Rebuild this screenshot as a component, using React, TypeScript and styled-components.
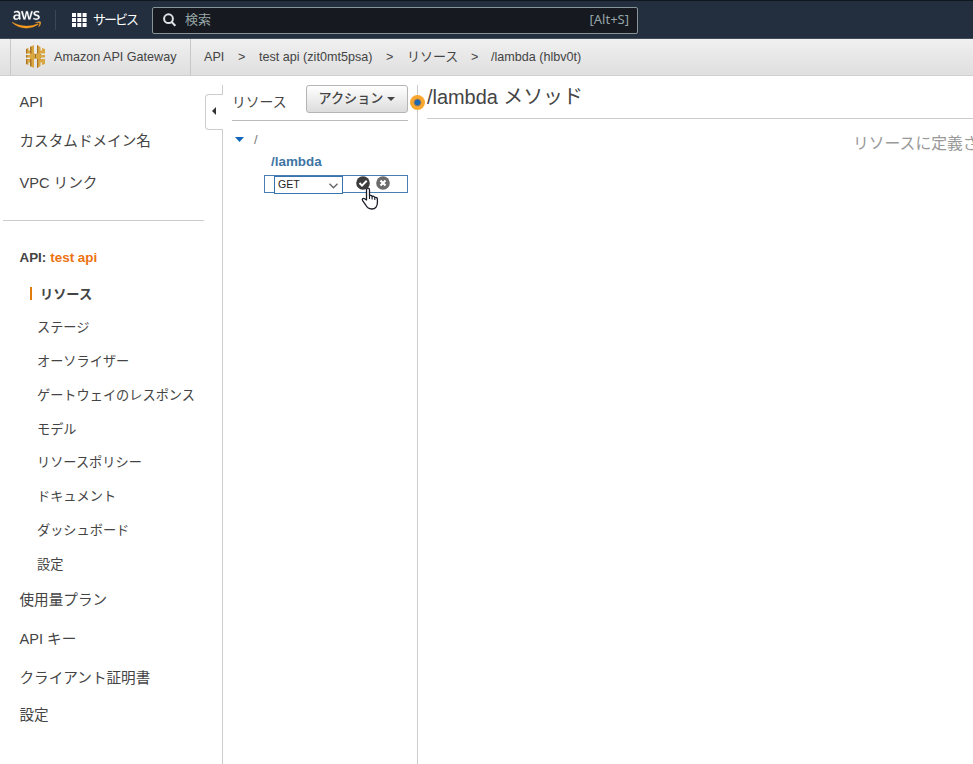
import React from "react";
import styled, { createGlobalStyle } from "styled-components";
import { FaAws } from "react-icons/fa";

const GlobalStyle = createGlobalStyle`
  * { box-sizing: border-box; }
  html, body { margin: 0; background: #fff; overflow: hidden; }
  body, button {
    font-family: "Liberation Sans", "Noto Sans CJK JP", sans-serif;
    color: #444;
  }
`;

const Page = styled.div`
  width: 973px;
  height: 764px;
  display: flex;
  flex-direction: column;
  overflow: hidden;
  white-space: nowrap;
`;

const TopBar = styled.header`
  height: 39px;
  flex: none;
  display: flex;
  align-items: center;
  padding: 1px 0 0 12px;
  background: #232f3e;
  border-top: 1px solid #10161d;
  border-bottom: 1px solid #414c5a;
`;

const AwsLogo = styled(FaAws)`
  width: 29px;
  height: 23px;
  flex: none;
  margin-top: -1px;
  path { fill: url(#awsFill); stroke: url(#awsFill); stroke-width: 5px; }
`;

const TopDivider = styled.span`
  width: 1px;
  height: 20px;
  margin: 0 16px 0 14px;
  background: #3b4756;
`;

const ServicesLabel = styled.span`
  width: 59px;
  margin: -3px 0 0 6px;
  font: 13px/20px "Noto Sans CJK JP", sans-serif;
  letter-spacing: -2px;
  color: #fff;
`;

const SearchBox = styled.div`
  width: 486px;
  height: 27px;
  padding: 0 8px 0 10px;
  display: flex;
  align-items: center;
  background: #16191f;
  border: 1px solid #879596;
  border-radius: 2px;
  font: 13px/20px "Noto Sans", "Noto Sans CJK JP", sans-serif;
  color: #95a5a6;
`;

const SearchText = styled.span`
  flex: 1;
  margin: -3px 0 0 9px;
`;

const Shortcut = styled.span`
  margin-top: -2px;
`;

const Breadcrumbs = styled.nav`
  height: 37px;
  flex: none;
  display: flex;
  align-items: center;
  padding-left: 10px;
  background: linear-gradient(#f0f0f0, #dfdfdf);
  border-bottom: 1px solid #d0d0d0;
  font-size: 12.6px;
`;

const Product = styled.div`
  width: 181px;
  height: 36px;
  display: flex;
  align-items: center;
  gap: 8px;
  padding: 0 0 1px 14px;
  border-left: 1px solid #c8c8c8;
  border-right: 1px solid #c8c8c8;
  margin-right: 13px;
`;

const Crumb = styled.span<{ $width: number; $size?: number }>`
  width: ${(p) => p.$width}px;
  margin-top: ${(p) => (p.$size ? -4 : -1)}px;
  font-size: ${(p) => p.$size ?? 12.6}px;
`;

const Body = styled.div`
  flex: 1;
  display: flex;
  min-height: 0;
`;

const Sidebar = styled.aside`
  width: 205px;
  padding-top: 7px;
`;

const NavItem = styled.div<{ $height: number; $nested?: boolean }>`
  height: ${(p) => p.$height}px;
  display: flex;
  align-items: center;
  padding-left: ${(p) => (p.$nested ? 37 : 19.5)}px;
  font-size: ${(p) => (p.$nested ? 13.2 : 14.6)}px;
`;

const NavRule = styled.hr`
  width: 201px;
  height: 1px;
  margin: 16px 0 19px 3px;
  border: 0;
  background: #ccc;
`;

const ApiTitle = styled.div`
  height: 36px;
  display: flex;
  align-items: center;
  gap: 4px;
  padding: 0 0 1px 19.5px;
  font-size: 13.4px;
  font-weight: bold;
  span { color: #ec7211; }
`;

const ActiveItem = styled.div`
  height: 34px;
  display: flex;
  align-items: center;
  padding-left: 30px;
  gap: 8px;
  font-size: 13.2px;
  font-weight: bold;
  &::before {
    content: "";
    width: 2px;
    height: 13px;
    background: #e07c0c;
  }
`;

const CollapseRail = styled.div`
  width: 18px;
  padding-top: 9px;
  display: flex;
  flex-direction: column;
`;

const RailLine = styled.div<{ $height?: number }>`
  width: 1px;
  align-self: flex-end;
  background: #ccc;
  ${(p) => (p.$height ? `height: ${p.$height}px;` : "flex: 1;")}
`;

const CollapseTab = styled.button`
  height: 36px;
  width: 18px;
  padding: 0 0 3px 6px;
  display: flex;
  align-items: center;
  background: #fff;
  border: 1px solid #ccc;
  border-right: 0;
  border-radius: 4px 0 0 4px;
`;

const ResourcePane = styled.section`
  width: 194px;
  padding: 9px 9px 0;
`;

const PaneHeader = styled.div`
  height: 36px;
  display: flex;
  align-items: flex-start;
  justify-content: space-between;
  border-bottom: 1px solid #bbb;
`;

const PaneTitle = styled.span`
  font-size: 13.8px;
  line-height: 35px;
`;

const ActionsButton = styled.button`
  width: 102px;
  height: 28px;
  padding: 0 0 4px;
  display: flex;
  align-items: center;
  justify-content: center;
  gap: 4px;
  background: linear-gradient(#fff, #dcdcdc);
  border: 1px solid #b5b5b5;
  border-radius: 3px;
  font-size: 13.1px;
  font-weight: 500;
  white-space: nowrap;
  svg { margin-top: 3px; }
`;

const RootRow = styled.div`
  height: 36px;
  display: flex;
  align-items: center;
  gap: 10px;
  padding-left: 3px;
  font-size: 13px;
  color: #777;
`;

const ResourceName = styled.div`
  height: 17px;
  margin-top: -5px;
  padding-left: 39px;
  font-size: 13.4px;
  line-height: 20px;
  font-weight: bold;
  color: #3d74a3;
`;

const MethodRow = styled.div`
  position: relative;
  width: 144px;
  height: 18px;
  margin: 6px 0 0 32px;
  padding-left: 9px;
  display: flex;
  align-items: center;
  border: 1px solid #4a7eb0;
`;

const MethodSelect = styled.div`
  width: 69px;
  height: 18px;
  flex: none;
  margin: 2px 13px 0 0;
  padding: 0 4px 2px 3px;
  display: flex;
  align-items: center;
  justify-content: space-between;
  background: #fff;
  border: 1px solid #3774ad;
  font-size: 10.6px;
  color: #222;
  svg { margin-top: 3px; }
`;

const RoundIcon = styled.svg`
  width: 14px;
  height: 14px;
  margin: -2px 6px 0 0;
  flex: none;
`;

const Pointer = styled.svg`
  position: absolute;
  left: 96px;
  top: 10px;
`;

const SplitRail = styled.div`
  width: 1px;
  margin-top: 9px;
  position: relative;
  background: #ccc;
`;

const SplitDot = styled.span`
  position: absolute;
  left: -7px;
  top: 10px;
  width: 15px;
  height: 15px;
  border-radius: 50%;
  background: radial-gradient(circle, #1e68b4 0 2.4px, #a77f51 3.4px, #f9a72f 4.3px);
`;

const MethodPane = styled.main`
  flex: 1;
  min-width: 0;
  padding-left: 9px;
`;

const MethodTitle = styled.h1`
  height: 43px;
  margin: 0;
  border-bottom: 1px solid #ccc;
  font-size: 19.9px;
  line-height: 42px;
  font-weight: normal;
`;

const EmptyMessage = styled.p`
  margin: 12px 0 0 426px;
  font-size: 15.8px;
  line-height: 26px;
  color: #999;
`;

const AppsIcon = () => (
  <svg width="15" height="14" viewBox="0 0 15 14" fill="#fff">
    {[0, 5, 10].map((y) =>
      [0, 5.3, 10.6].map((x) => <rect key={`${x}-${y}`} x={x} y={y} width="4" height="4" />)
    )}
  </svg>
);

const SearchIcon = () => (
  <svg width="13" height="14" viewBox="0 0 13 14" fill="none" stroke="#dfe3e5" strokeWidth="2">
    <circle cx="5.5" cy="5.7" r="4.4" />
    <path d="M8.7 9l3.6 3.8" />
  </svg>
);

const GatewayIcon = () => (
  <svg width="21" height="23" viewBox="0 0 21 23">
    <path fill="#9d7030" d="M5 9h11v4.500H5z" />
    <path fill="#d9a741" d="M5 2l4-2v8.500h1V14H9v9l-4-2v-3.500H3.500V20L1 19v-5h4v-1.500H1V10h4V8.500H1V4l2.500-1v2.500H5z" />
    <path fill="#d9a741" d="M12 0l3.500 2v3.500H17V3l3 1v4.500h-4.500V10H20v2.500h-4.500V14H20v5l-3 1v-2.500h-1.500V21L12 23v-9h-1V8.500h1z" />
    <path fill="#a87528" d="M1 4l1.300-.5v5H1zM1 14h1.300v5.500L1 19zM5 2l1.500-.7v7.200H5zM5 14h1.500v7.700L5 21zM12 0l1.200.7v7.800H12zM12 14h1.200v8.300l-1.200.7zM1 10h1.300v2.500H1z" />
  </svg>
);

const nestedItems: [string, number][] = [
  ["ステージ", 33],
  ["オーソライザー", 34],
  ["ゲートウェイのレスポンス", 34],
  ["モデル", 34],
  ["リソースポリシー", 33],
  ["ドキュメント", 34],
  ["ダッシュボード", 34],
  ["設定", 34],
];

const lowerItems: [string, number][] = [
  ["使用量プラン", 36],
  ["API キー", 42],
  ["クライアント証明書", 36],
  ["設定", 39],
];

export default function App() {
  return (
    <Page>
      <GlobalStyle />
      <TopBar>
        <AwsLogo />
        <TopDivider />
        <AppsIcon />
        <ServicesLabel>サービス</ServicesLabel>
        <SearchBox>
          <SearchIcon />
          <SearchText>検索</SearchText>
          <Shortcut>[Alt+S]</Shortcut>
        </SearchBox>
        <svg width="0" height="0">
          <linearGradient id="awsFill" gradientUnits="userSpaceOnUse" x1="0" y1="0" x2="0" y2="512">
            <stop offset="0.6" stopColor="#fff" />
            <stop offset="0.6" stopColor="#f79a1e" />
          </linearGradient>
        </svg>
      </TopBar>
      <Breadcrumbs>
        <Product>
          <GatewayIcon />
          Amazon API Gateway
        </Product>
        <Crumb $width={34}>API</Crumb>
        <Crumb $width={21}>&gt;</Crumb>
        <Crumb $width={127}>test api (zit0mt5psa)</Crumb>
        <Crumb $width={21}>&gt;</Crumb>
        <Crumb $width={64} $size={13}>リソース</Crumb>
        <Crumb $width={20}>&gt;</Crumb>
        <Crumb $width={100}>/lambda (hlbv0t)</Crumb>
      </Breadcrumbs>
      <Body>
        <Sidebar>
          <NavItem $height={38}>API</NavItem>
          <NavItem $height={37}>カスタムドメイン名</NavItem>
          <NavItem $height={46}>VPC リンク</NavItem>
          <NavRule />
          <ApiTitle>API: <span>test api</span></ApiTitle>
          <ActiveItem>リソース</ActiveItem>
          {nestedItems.map(([label, height]) => (
            <NavItem key={label} $height={height} $nested>{label}</NavItem>
          ))}
          {lowerItems.map(([label, height]) => (
            <NavItem key={label} $height={height}>{label}</NavItem>
          ))}
        </Sidebar>
        <CollapseRail>
          <RailLine $height={9} />
          <CollapseTab aria-label="メニューを閉じる">
            <svg width="4" height="8" viewBox="0 0 4 8"><path fill="#333" d="M4 0v8L0 4z" /></svg>
          </CollapseTab>
          <RailLine />
        </CollapseRail>
        <ResourcePane>
          <PaneHeader>
            <PaneTitle>リソース</PaneTitle>
            <ActionsButton>
              アクション
              <svg width="8" height="4" viewBox="0 0 8 4"><path fill="#444" d="M0 0h8L4 4z" /></svg>
            </ActionsButton>
          </PaneHeader>
          <RootRow>
            <svg width="9" height="5" viewBox="0 0 9 5"><path fill="#1166bb" d="M0 0h9L4.500 5z" /></svg>
            /
          </RootRow>
          <ResourceName>/lambda</ResourceName>
          <MethodRow>
            <MethodSelect>
              GET
              <svg width="9" height="6" viewBox="0 0 9 6" fill="none" stroke="#666" strokeWidth="1.400">
                <path d="M.5 .8l4 4 4-4" />
              </svg>
            </MethodSelect>
            <RoundIcon viewBox="0 0 14 14">
              <circle cx="7" cy="7" r="6.800" fill="#3c3c3c" />
              <path d="M3.500 7l2.500 2.600 4.700-4.800" fill="none" stroke="#fff" strokeWidth="2" />
            </RoundIcon>
            <RoundIcon viewBox="0 0 14 14">
              <circle cx="7" cy="7" r="6.800" fill="#6b6b6b" />
              <path d="M4.500 4.500l5 5m0-5l-5 5" stroke="#fff" strokeWidth="2.200" />
            </RoundIcon>
            <Pointer width="19" height="25" viewBox="0 0 19 25">
              <path
                d="M5.500 14V4c0-2.400 3-2.400 3 0v6c.6-1 2.400-.8 2.600.6.8-.8 2.500-.4 2.700.9 1-.5 2.600.1 2.600 1.600v3.500c0 4.200-2 6.400-5.600 6.400-3.400 0-4.800-1.500-6.200-4.200l-3-4.200c-1-1.500.6-2.900 2-1.900z"
                fill="#fff" stroke="#1c1c28" strokeWidth="1.300" strokeLinejoin="round"
              />
              <path d="M8.500 10v3M11.100 10.800v2.700M13.800 11.700v2.300" stroke="#1c1c28" strokeWidth="1.100" />
            </Pointer>
          </MethodRow>
        </ResourcePane>
        <SplitRail>
          <SplitDot />
        </SplitRail>
        <MethodPane>
          <MethodTitle>/lambda メソッド</MethodTitle>
          <EmptyMessage>リソースに定義さ</EmptyMessage>
        </MethodPane>
      </Body>
    </Page>
  );
}
